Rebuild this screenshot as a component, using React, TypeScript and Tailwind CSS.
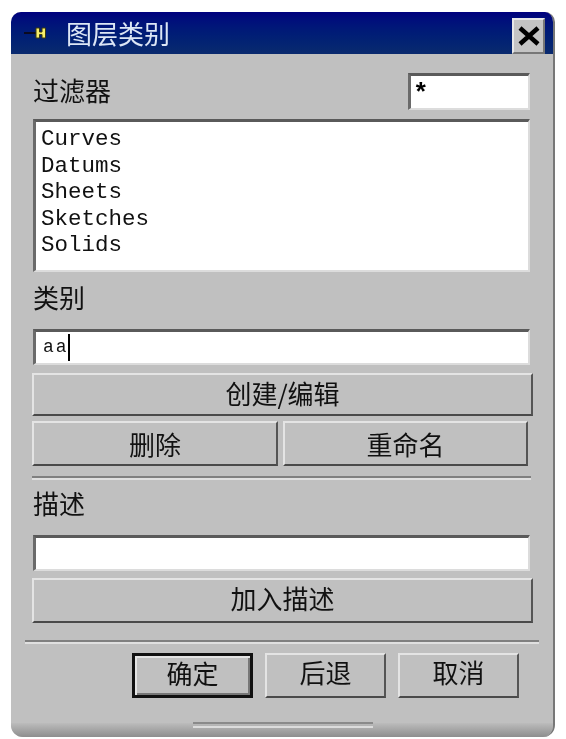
const raisedEdge = "border-2 border-t-[#e4e4e4] border-l-[#e4e4e4] border-r-[#555555] border-b-[#4a4a4a]"
const raised = "flex items-center justify-center bg-[#c0c0c0] text-[26px] leading-none text-[#111111]"
const sunken =
  "border-t-[3px] border-l-[3px] border-r-2 border-b-2 border-t-[#5a5a5a] border-l-[#6a6a6a] border-r-[#dcdcdc] border-b-[#dcdcdc] bg-white"
const mono = "font-['Liberation_Mono','Noto_Sans_CJK_SC',monospace]"

const Separator = ({ className }: { className: string }) => (
  <div className={"border-t-2 border-b-2 border-t-[#808080] border-b-[#e0e0e0] " + className} />
)

const Logo = () => (
  <svg width="26" height="14" viewBox="0 0 26 14" className="shrink-0">
    <path d="M0 7h12" stroke="#0a0a20" strokeWidth="2" />
    <path d="M12 2h3.500v4h2.500V2h3.500v10H18V8.500h-2.500V12H12z" fill="#f7ee6a" stroke="#3a3a10" strokeWidth="1" />
  </svg>
)

const CloseButton = () => (
  <div className="flex h-[36px] w-[33px] items-center justify-center border-2 border-t-[#e8e8e8] border-l-[#e8e8e8] border-r-[#777777] border-b-[#777777] bg-[#c4c4c4]">
    <svg width="24" height="20" viewBox="0 0 24 20">
      <path d="M3 2l18 16M21 2L3 18" stroke="#000000" strokeWidth="4.500" />
    </svg>
  </div>
)

const ListItems = ["Curves", "Datums", "Sheets", "Sketches", "Solids"]

export default function App() {
  return (
    <div className="min-h-[739px] bg-white pl-[11px] pt-[12px] font-['Noto_Sans_CJK_SC','Liberation_Sans',sans-serif] blur-[0.4px]">
      <div className="flex h-[725px] w-[544px] flex-col overflow-hidden rounded-t-[10px] rounded-b-[12px] border-r-2 border-[#777777] bg-[#c0c0c0]">
        <div className="flex h-[42px] shrink-0 bg-gradient-to-b from-[#00007e] to-[#0a2a6e] pl-[13px] pr-[8px]">
          <div className="flex items-center">
            <Logo />
            <span className="ml-[16px] pb-[1px] text-[26px] leading-none text-[#dce6f5]">图层类别</span>
          </div>
          <div className="ml-auto mt-[6px]"><CloseButton /></div>
        </div>

        <div className="flex flex-1 flex-col px-[22px]">
          <div className="mt-[19px] flex h-[37px] items-center justify-between pr-[1px]">
            <span className="pb-[3px] text-[26px] leading-none text-[#111111]">过滤器</span>
            <div className={sunken + " h-[37px] w-[122px] pl-[2px] text-[26px] font-bold leading-[36px] " + mono}>*</div>
          </div>
          <div className={sunken + " mt-[9px] mr-[1px] flex h-[153px] flex-col pl-[5px] pt-[4px] text-[22.5px] leading-[26.5px] text-[#111111] " + mono}>
            {ListItems.map((item) => (
              <div key={item}>{item}</div>
            ))}
          </div>

          <div className="mt-[9px] h-[32px] text-[26px] leading-[32px] text-[#111111]">类别</div>
          <div className={sunken + " mt-[16px] mr-[1px] flex h-[36px] items-center pl-[7px] text-[18px] tracking-[2px] text-[#111111] " + mono}>
            aa<span className="ml-[-1px] h-[27px] w-[2px] bg-black" />
          </div>
          <div className={raised + " " + raisedEdge + " mt-[8px] h-[43px] -mr-[2px] -ml-[1px] pb-[4px]"}>创建/编辑</div>
          <div className="mt-[5px] -ml-[1px] flex gap-[5px] pr-[3px]">
            <div className={raised + " " + raisedEdge + " h-[45px] w-[246px]"}>删除</div>
            <div className={raised + " " + raisedEdge + " h-[45px] flex-1"}>重命名</div>
          </div>
          <Separator className="mt-[10px] -ml-[1px]" />

          <div className="mt-[7px] h-[32px] text-[26px] leading-[32px] text-[#111111]">描述</div>
          <div className={sunken + " mt-[16px] mr-[1px] h-[36px]"} />
          <div className={raised + " " + raisedEdge + " mt-[7px] h-[45px] -mr-[2px] -ml-[1px] pb-[5px]"}>加入描述</div>

          <Separator className="mt-[17px] -mx-[8px]" />
          <div className="mt-[9px] flex justify-end gap-[12px] pr-[12px]">
            <div className={raised + " h-[45px] w-[121px] border-[3px] border-[#111111] pb-[6px] shadow-[inset_2px_2px_0_#e4e4e4,inset_-2px_-2px_0_#777777]"}>确定</div>
            <div className={raised + " " + raisedEdge + " h-[45px] w-[121px] pb-[8px]"}>后退</div>
            <div className={raised + " " + raisedEdge + " h-[45px] w-[121px] pb-[8px]"}>取消</div>
          </div>
        </div>

        <div className="flex h-[14px] shrink-0 justify-center bg-gradient-to-b from-[#bcbcbc] to-[#8e8e8e]">
          <div className="ml-[2px] mt-[-1px] h-[6px] w-[180px] border-t-2 border-[#8a8a8a] border-b-2 border-b-[#dcdcdc]" />
        </div>
      </div>
    </div>
  )
}
